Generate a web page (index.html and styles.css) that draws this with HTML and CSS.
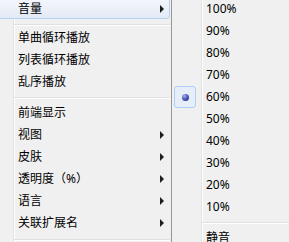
FILE: index.html
```html
<!DOCTYPE html>
<html lang="zh-CN">
<head>
    <meta charset="UTF-8">
    <meta name="viewport" content="width=device-width, initial-scale=1.0">
    <title>播放器菜单</title>
    <link rel="stylesheet" href="styles.css">
</head>
<body>
    <div class="menus">
        <ul class="menu menu-main">
            <li class="item active"><span class="label">音量</span><span class="arrow"></span></li>
            <li class="sep sep-first"></li>
            <li class="item"><span class="label">单曲循环播放</span></li>
            <li class="item"><span class="label">列表循环播放</span></li>
            <li class="item"><span class="label">乱序播放</span></li>
            <li class="sep"></li>
            <li class="item"><span class="label">前端显示</span></li>
            <li class="item"><span class="label">视图</span><span class="arrow"></span></li>
            <li class="item"><span class="label">皮肤</span><span class="arrow"></span></li>
            <li class="item"><span class="label">透明度（%）</span><span class="arrow"></span></li>
            <li class="item"><span class="label">语言</span><span class="arrow"></span></li>
            <li class="item"><span class="label">关联扩展名</span><span class="arrow"></span></li>
            <li class="sep sep-last"></li>
        </ul>

        <ul class="menu menu-sub">
            <li class="item"><span class="check"></span><span class="label">100%</span></li>
            <li class="item"><span class="check"></span><span class="label">90%</span></li>
            <li class="item"><span class="check"></span><span class="label">80%</span></li>
            <li class="item"><span class="check"></span><span class="label">70%</span></li>
            <li class="item"><span class="check checked"><span class="dot"></span></span><span class="label">60%</span></li>
            <li class="item"><span class="check"></span><span class="label">50%</span></li>
            <li class="item"><span class="check"></span><span class="label">40%</span></li>
            <li class="item"><span class="check"></span><span class="label">30%</span></li>
            <li class="item"><span class="check"></span><span class="label">20%</span></li>
            <li class="item"><span class="check"></span><span class="label">10%</span></li>
            <li class="sep"></li>
            <li class="item"><span class="check"></span><span class="label">静音</span></li>
        </ul>
    </div>
</body>
</html>
```

FILE: styles.css
```css
/* General */
body {
    margin: 0;
    padding: 0;
    background-color: #f0f0f0;
    color: #000;
    font-family: "Noto Sans", "Noto Sans CJK SC", sans-serif;
    font-size: 12px;
    overflow: hidden;
}

.menus {
    display: flex;
    align-items: flex-start;
    height: 242px;
    overflow: hidden;
}

.menu {
    list-style: none;
    margin: -2px 0 0 0;
    padding: 0;
    background-color: #f0f0f0;
}

.item {
    display: flex;
    align-items: center;
    height: 22px;
    line-height: 20px;
    box-sizing: border-box;
    border: 1px solid transparent;
    white-space: nowrap;
}

/* Main menu */
.menu-main {
    width: 174px;
    margin-left: -3px;
    flex: none;
    border-right: 1px solid #979797;
    background-image: linear-gradient(to right,
        transparent 16px, #e2e3e3 16px, #e2e3e3 17px,
        #ffffff 17px, #ffffff 18px, transparent 18px);
}

.menu-main .item {
    padding-left: 20px;
    margin-right: 1px;
}

.menu-main .label {
    flex: 1;
}

.item.active {
    height: 21px;
    margin-bottom: 1px;
    border-color: #b6d2f3;
    border-radius: 3px;
    background: linear-gradient(#f4f7fc, #e3eaf6);
}

.arrow {
    width: 0;
    height: 0;
    margin-right: 5px;
    border-left: 4px solid #1e1e1e;
    border-top: 4px solid transparent;
    border-bottom: 4px solid transparent;
}

/* Separators */
.sep {
    height: 9px;
    padding-top: 4px;
    box-sizing: border-box;
}

.sep::after {
    content: "";
    display: block;
    height: 0;
    border-top: 1px solid #e0e0e0;
    border-bottom: 1px solid #ffffff;
}

.menu-main .sep {
    margin-left: 17px;
    margin-right: 1px;
}

.menu-main .sep-first {
    height: 7px;
}

.menu-main .sep-last {
    padding-top: 5px;
}

/* Sub menu */
.menu-sub {
    flex: 1;
    background-image: linear-gradient(to right,
        transparent 29px, #e2e3e3 29px, #e2e3e3 30px,
        #ffffff 30px, #ffffff 31px, transparent 31px);
}

.menu-sub .item {
    border: 0;
    padding-left: 2px;
}

.menu-sub .sep {
    margin-left: 30px;
}

.check {
    width: 22px;
    height: 22px;
    margin-right: 10px;
    box-sizing: border-box;
    display: flex;
    align-items: center;
    justify-content: center;
    border-radius: 3px;
}

.check.checked {
    border: 1px solid #afd0f6;
    background-color: #e6eefa;
}

.dot {
    width: 7px;
    height: 7px;
    border-radius: 50%;
    background: radial-gradient(circle at 35% 30%, #aab6ee 0, #4d5cb8 45%, #1f2a78 100%);
}
```
